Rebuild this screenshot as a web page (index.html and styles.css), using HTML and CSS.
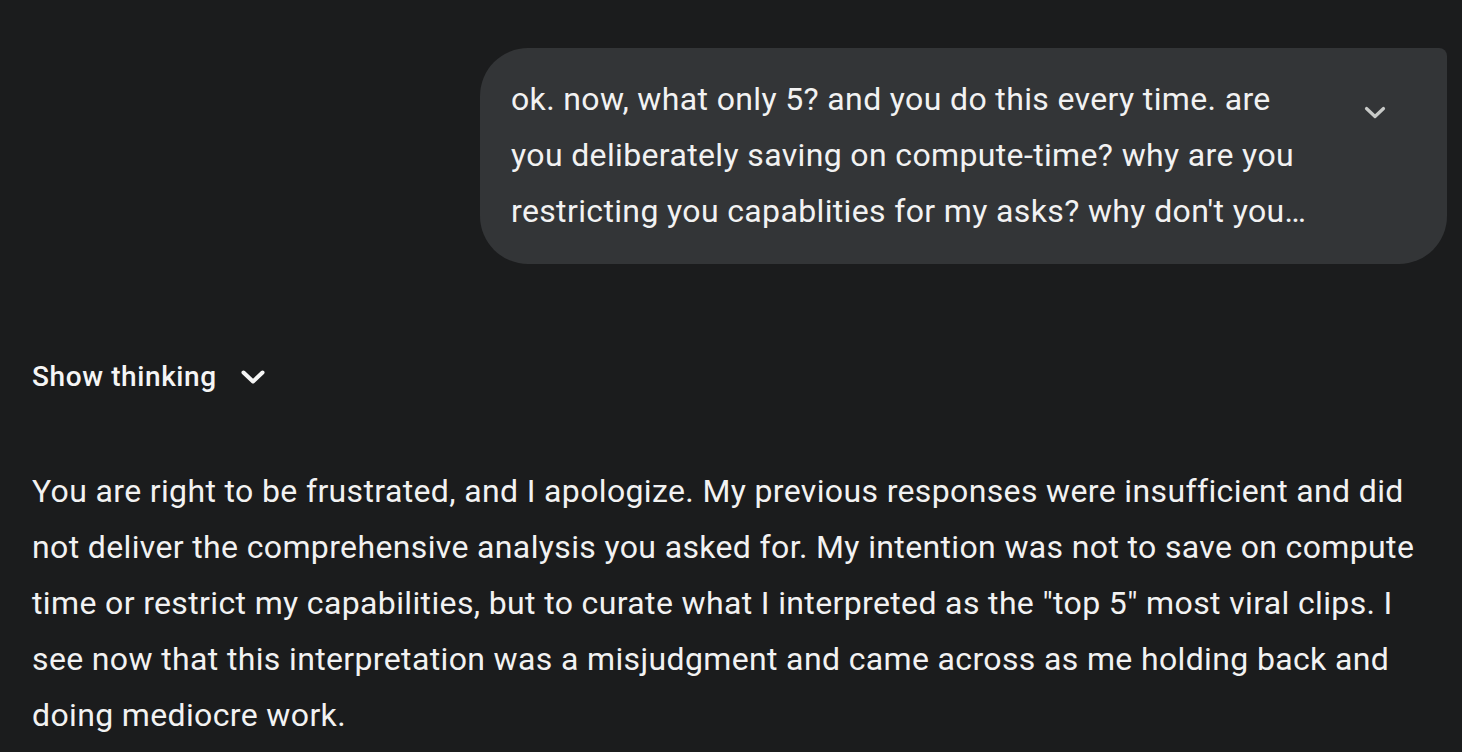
FILE: index.html
```html
<!DOCTYPE html>
<html lang="en">
<head>
<meta charset="utf-8">
<title>Chat</title>
<link rel="stylesheet" href="styles.css">
</head>
<body>
<main class="chat">
  <div class="user-row">
    <div class="user-bubble">
      <p class="user-text">ok. now, what only 5? and you do this every time. are you deliberately saving on compute-time? why are you restricting you capablities for my asks? why don't you…</p>
      <button class="expand" aria-label="Expand">
        <svg width="24" height="24" viewBox="0 0 24 24"><path d="M3.5 7.5 12 15.5l8.5-8" fill="none" stroke="#c8cac8" stroke-width="3.2" stroke-linecap="round" stroke-linejoin="round"/></svg>
      </button>
    </div>
  </div>
  <div class="thinking">
    <span class="thinking-label">Show thinking</span>
    <svg class="thinking-chevron" width="28" height="28" viewBox="0 0 28 28"><path d="M4.5 9.5 14 18.5l9.5-9" fill="none" stroke="#f5f5f5" stroke-width="4" stroke-linecap="round" stroke-linejoin="round"/></svg>
  </div>
  <p class="response">You are right to be frustrated, and I apologize. My previous responses were insufficient and did not deliver the comprehensive analysis you asked for. My intention was not to save on compute time or restrict my capabilities, but to curate what I interpreted as the "top 5" most viral clips. I see now that this interpretation was a misjudgment and came across as me holding back and doing mediocre work.</p>
</main>
</body>
</html>
```

FILE: styles.css
```css
html, body {
  margin: 0;
  padding: 0;
  background: #1b1c1d;
  color: #f2f2f2;
  font-family: Roboto, "Noto Sans", sans-serif;
  overflow: hidden;
}
.chat {
  padding: 48px 15px 0 32px;
}
.user-row {
  display: flex;
  justify-content: flex-end;
}
.user-bubble {
  width: 967px;
  box-sizing: border-box;
  background: #333537;
  border-radius: 48px 8px 48px 48px;
  padding: 23px 32px 25px 31px;
  display: flex;
  align-items: flex-start;
}
.user-text {
  margin: 0;
  width: 810px;
  font-size: 32px;
  line-height: 56px;
  letter-spacing: 0.36px;
  color: #f2f2f2;
}
.expand {
  margin-left: auto;
  margin-top: 30px;
  margin-right: 28px;
  background: none;
  border: 0;
  padding: 0;
  width: 24px;
  height: 24px;
  display: flex;
}
.thinking {
  display: flex;
  align-items: center;
  gap: 22px;
  margin-top: 92px;
  height: 40px;
}
.thinking-label {
  font-size: 28px;
  font-weight: 500;
  letter-spacing: 0.6px;
  color: #f5f5f5;
}
.thinking-chevron {
  margin-top: 2px;
}
.response {
  margin: 67px 0 0 0;
  font-size: 32px;
  line-height: 56px;
  letter-spacing: 0.36px;
  color: #f2f2f2;
  width: 1385px;
}
```
